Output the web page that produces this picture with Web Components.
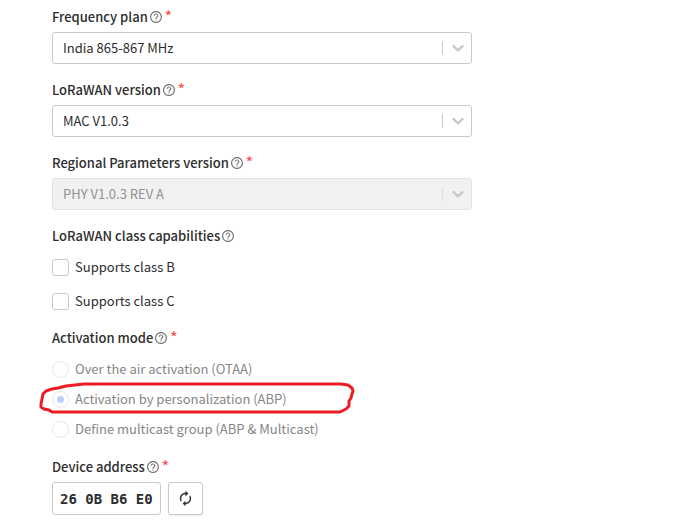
<!DOCTYPE html>
<html lang="en">
<head>
<meta charset="utf-8">
<title>End device settings</title>
<style>
    body {
        --text-color: #2d2d2d;
        --border-color: #c9c9c9;
        --muted-color: #868686;
        --required-color: #ff5050;
        margin: 0;
        background: #fff;
        color: var(--text-color);
        font: 13px/20px "Noto Sans CJK SC", "Open Sans", sans-serif;
    }
</style>
</head>
<body>
<device-form>
    <select-field label="Frequency plan" value="India 865-867 MHz" required></select-field>
    <select-field label="LoRaWAN version" value="MAC V1.0.3" required></select-field>
    <select-field label="Regional Parameters version" value="PHY V1.0.3 REV A" required disabled></select-field>
    <option-group label="LoRaWAN class capabilities" type="checkbox" options="Supports class B|Supports class C"></option-group>
    <option-group label="Activation mode" type="radio" options="Over the air activation (OTAA)|Activation by personalization (ABP)|Define multicast group (ABP &amp; Multicast)" selected="1" required disabled></option-group>
    <address-field label="Device address" value="26 0B B6 E0"></address-field>
</device-form>

<script>
const labelStyles = `
    .title {
        display: flex;
        align-items: center;
        gap: 2px;
        height: 20px;
        margin-bottom: 5px;
        font-weight: 500;
    }
    .star {
        color: var(--required-color);
        font-size: 15px;
        align-self: flex-start;
        line-height: 17px;
        padding-left: 1px;
    }
`;

const star = required => required ? '<span class="star" aria-hidden="true">*</span>' : '';

class DeviceForm extends HTMLElement {
    constructor() {
        super();
        this.attachShadow({ mode: 'open' });
        this.shadowRoot.innerHTML = `
            <style>
                :host {
                    display: block;
                    padding: 7px 52px 12px;
                }
                form {
                    display: flex;
                    flex-direction: column;
                    gap: 16px;
                    max-width: 420px;
                }
            </style>
            <form><slot></slot></form>
        `;
    }
}

class HelpIcon extends HTMLElement {
    constructor() {
        super();
        this.attachShadow({ mode: 'open' });
        this.shadowRoot.innerHTML = `
            <style>
                :host {
                    display: flex;
                    color: #777;
                }
            </style>
            <svg width="12" height="12" viewBox="0 0 20 20" fill="currentColor" aria-hidden="true">
                <path d="M9 16h2v-2H9v2zm1-16C4.480 0 0 4.480 0 10s4.480 10 10 10 10-4.480 10-10S15.520 0 10 0zm0 18c-4.410 0-8-3.590-8-8s3.590-8 8-8 8 3.590 8 8-3.590 8-8 8zm0-14C7.790 4 6 5.790 6 8h2c0-1.100.9-2 2-2s2 .9 2 2c0 2-3 1.750-3 5h2c0-2.250 3-2.500 3-5 0-2.210-1.790-4-4-4z"/>
            </svg>
        `;
    }
}

class SelectField extends HTMLElement {
    connectedCallback() {
        this.attachShadow({ mode: 'open' });
        const disabled = this.hasAttribute('disabled');
        this.shadowRoot.innerHTML = `
            <style>
                ${labelStyles}
                :host { display: block; }
                .control {
                    display: grid;
                    grid-template-columns: 1fr 30px;
                    align-items: center;
                }
                select {
                    grid-area: 1 / 1 / 2 / 3;
                    appearance: none;
                    box-sizing: border-box;
                    width: 100%;
                    height: 32px;
                    margin: 0;
                    padding: 0 40px 0 10px;
                    border: 1px solid var(--border-color);
                    border-radius: 3px;
                    background: #fff;
                    color: inherit;
                    font: inherit;
                }
                select:disabled {
                    border-color: #e2e2e2;
                    background: #f1f1f1;
                    color: #929292;
                    opacity: 1;
                }
                .arrow {
                    grid-area: 1 / 2;
                    display: flex;
                    align-items: center;
                    justify-content: center;
                    box-sizing: border-box;
                    height: 14px;
                    border-left: 1px solid var(--border-color);
                    pointer-events: none;
                }
                select:disabled + .arrow { border-color: #dedede; }
            </style>
            <div class="title">
                <label for="field">${this.getAttribute('label')}</label>
                <help-icon></help-icon>${star(this.hasAttribute('required'))}
            </div>
            <div class="control">
                <select id="field" ${disabled ? 'disabled' : ''}>
                    <option>${this.getAttribute('value')}</option>
                </select>
                <span class="arrow">
                    <svg width="14" height="14" viewBox="0 0 14 14" fill="none" stroke="#c9c9c9" stroke-width="2.500" stroke-linecap="round" stroke-linejoin="round" aria-hidden="true">
                        <path d="M2.500 5.200L7 9.300l4.500-4.100"/>
                    </svg>
                </span>
            </div>
        `;
    }
}

class OptionGroup extends HTMLElement {
    connectedCallback() {
        this.attachShadow({ mode: 'open' });
        const type = this.getAttribute('type');
        const selected = this.getAttribute('selected');
        const disabled = this.hasAttribute('disabled') ? 'disabled' : '';
        const rows = this.getAttribute('options').split('|').map((text, i) => {
            const on = selected === String(i);
            return `
                <div class="row">
                    <label>
                        <input type="${type}" name="choice" ${on ? 'checked' : ''} ${disabled}>
                        <span>${text.replace('&', '&amp;')}</span>
                    </label>
                    ${on ? '<pen-mark></pen-mark>' : ''}
                </div>`;
        }).join('');
        this.shadowRoot.innerHTML = `
            <style>
                ${labelStyles}
                :host { display: block; }
                .rows {
                    display: flex;
                    flex-direction: column;
                    gap: 14px;
                    padding: 6px 0 1px;
                }
                .rows.radio {
                    gap: 10px;
                    padding: 6px 0 2px;
                }
                .row { position: relative; }
                label {
                    display: flex;
                    align-items: center;
                    gap: 6px;
                }
                .radio label { color: var(--muted-color); }
                input {
                    appearance: none;
                    box-sizing: border-box;
                    width: 17px;
                    height: 17px;
                    margin: 0;
                    border: 1px solid var(--border-color);
                    border-radius: 3px;
                    background: #fff;
                }
                input[type="radio"] {
                    border-color: #e6e6e6;
                    border-radius: 50%;
                }
                input[type="radio"]:checked {
                    background: radial-gradient(circle, #b9cbff 3px, #fff 4px);
                }
            </style>
            <div class="title" id="title">
                <span>${this.getAttribute('label')}</span>
                <help-icon></help-icon>${star(this.hasAttribute('required'))}
            </div>
            <div class="rows ${type}" role="group" aria-labelledby="title">${rows}</div>
        `;
    }
}

// Hand-drawn red ring around the chosen option
class PenMark extends HTMLElement {
    constructor() {
        super();
        this.attachShadow({ mode: 'open' });
        this.shadowRoot.innerHTML = `
            <style>
                :host {
                    position: absolute;
                    left: -14px;
                    top: -10px;
                    pointer-events: none;
                }
                svg { display: block; }
            </style>
            <svg width="320" height="40" viewBox="0 0 320 40" fill="none" stroke="#ed1c24" stroke-width="3" stroke-linejoin="round" stroke-linecap="round" aria-hidden="true">
                <path d="M303 5H46L37 6 28 7 20 9 14 10 8 12 5 15 4 20 3 25 3 28 6 30 11 31 14 33H302L308 30 311 27 311 22 313 19 314 15 315 12 314 9 310 6 303 5"/>
            </svg>
        `;
    }
}

class AddressField extends HTMLElement {
    connectedCallback() {
        this.attachShadow({ mode: 'open' });
        this.shadowRoot.innerHTML = `
            <style>
                ${labelStyles}
                :host { display: block; }
                .line {
                    display: flex;
                    gap: 7px;
                }
                input, button {
                    box-sizing: border-box;
                    height: 33px;
                    margin: 0;
                    border: 1px solid var(--border-color);
                    border-radius: 3px;
                    background: #fff;
                    color: inherit;
                }
                input {
                    width: 109px;
                    padding: 0 7px;
                    font: bold 14px "DejaVu Sans Mono", monospace;
                }
                button {
                    display: flex;
                    align-items: center;
                    justify-content: center;
                    width: 35px;
                    padding: 0;
                    box-shadow: 0 1px 2px #0001;
                }
            </style>
            <div class="title">
                <label for="address">${this.getAttribute('label')}</label>
                <help-icon></help-icon>${star(true)}
            </div>
            <div class="line">
                <input id="address" type="text" value="${this.getAttribute('value')}">
                <button type="button" aria-label="Generate">
                    <svg width="17" height="17" viewBox="0 0 24 24" fill="currentColor" aria-hidden="true">
                        <path d="M12 6v3l4-4-4-4v3c-4.420 0-8 3.580-8 8 0 1.570.46 3.030 1.240 4.260L6.700 14.800c-.45-.83-.7-1.790-.7-2.800 0-3.310 2.690-6 6-6zm6.760 1.740L17.300 9.200c.44.84.7 1.790.7 2.800 0 3.310-2.690 6-6 6v-3l-4 4 4 4v-3c4.420 0 8-3.580 8-8 0-1.570-.46-3.030-1.240-4.260z"/>
                    </svg>
                </button>
            </div>
        `;
    }
}

customElements.define('help-icon', HelpIcon);
customElements.define('pen-mark', PenMark);
customElements.define('device-form', DeviceForm);
customElements.define('select-field', SelectField);
customElements.define('option-group', OptionGroup);
customElements.define('address-field', AddressField);
</script>
</body>
</html>
